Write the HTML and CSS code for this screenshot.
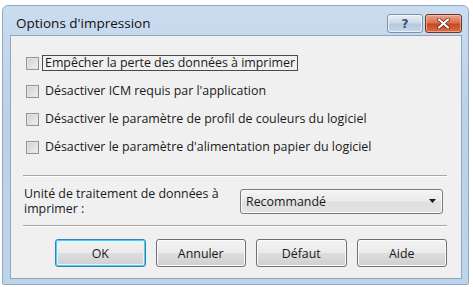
FILE: index.html
```html
<!DOCTYPE html>
<html lang="fr">
<head>
<meta charset="utf-8">
<title>Options d'impression</title>
<link rel="stylesheet" href="styles.css">
</head>
<body>
<div class="window">
  <div class="titlebar">
    <span class="title">Options d'impression</span>
    <div class="caption-buttons">
      <div class="cap-btn help"><span>?</span></div>
      <div class="cap-btn close">
        <svg width="13" height="11" viewBox="0 0 13 11"><path d="M2 1.5 L11 9.5 M11 1.5 L2 9.5" stroke="#5a1f14" stroke-width="3.6" stroke-linecap="round"/><path d="M2 1.5 L11 9.5 M11 1.5 L2 9.5" stroke="#ffffff" stroke-width="2.2" stroke-linecap="round"/></svg>
      </div>
    </div>
  </div>
  <div class="client">
    <div class="checks">
      <div class="row"><span class="box"></span><span class="label focus">Empêcher la perte des données à imprimer</span></div>
      <div class="row"><span class="box"></span><span class="label">Désactiver ICM requis par l'application</span></div>
      <div class="row"><span class="box"></span><span class="label">Désactiver le paramètre de profil de couleurs du logiciel</span></div>
      <div class="row"><span class="box"></span><span class="label">Désactiver le paramètre d'alimentation papier du logiciel</span></div>
    </div>
    <div class="sep first"></div>
    <div class="unit">
      <div class="unit-label"><div>Unité de traitement de données à</div><div>imprimer :</div></div>
      <div class="combo"><span>Recommandé</span><svg class="arrow" width="7" height="4" viewBox="0 0 7 4"><path d="M0 0 H7 L3.5 4 Z" fill="#1a1a1a"/></svg></div>
    </div>
    <div class="sep"></div>
    <div class="buttons">
      <div class="btn default">OK</div>
      <div class="btn">Annuler</div>
      <div class="btn">Défaut</div>
      <div class="btn">Aide</div>
    </div>
  </div>
</div>
</body>
</html>
```

FILE: styles.css
```css
html, body {
  margin: 0;
  padding: 0;
  background: #ffffff;
}
body {
  font-family: "Open Sans", "Noto Sans", sans-serif;
  color: #1a1a1a;
}
.window {
  margin: 5px 0 0 2px;
  width: 467px;
  height: 280px;
  box-sizing: border-box;
  background: linear-gradient(#cadcef, #bad1e9 40%, #bdd4eb);
  border: 1px solid #8fa9c6;
  border-radius: 6px 6px 2px 2px;
  display: flex;
  flex-direction: column;
  padding: 0 6px 5px 7px;
}
.titlebar {
  height: 29px;
  display: flex;
  align-items: flex-start;
  justify-content: space-between;
}
.title {
  font-size: 13.5px;
  margin-left: 6px;
  margin-top: 8px;
  color: #111;
  line-height: 18px;
}
.caption-buttons {
  display: flex;
  gap: 2px;
  margin-top: 8px;
}
.cap-btn {
  height: 19px;
  width: 36px;
  box-sizing: border-box;
  border-radius: 3px;
  display: flex;
  align-items: center;
  justify-content: center;
}
.help {
  border: 1px solid #7d93ad;
  background: linear-gradient(#e7eef6, #cbd9e8 48%, #b5c8de 52%, #c7d8ea);
  box-shadow: inset 0 0 0 1px rgba(255,255,255,0.6);
}
.help span {
  font-family: "DejaVu Sans", sans-serif;
  font-weight: bold;
  font-size: 12px;
  color: #3b4f66;
  line-height: 12px;
}
.close {
  width: 37px;
  border: 1px solid #6e3328;
  background: linear-gradient(#eba58e, #da6c4f 48%, #c9461f 52%, #d96d44);
  box-shadow: inset 0 0 0 1px rgba(255,210,190,0.55);
}
.client {
  flex: 1;
  background: #f0f0f0;
  border: 1px solid #8ea6c0;
  display: flex;
  flex-direction: column;
  padding: 0 14px 0 12px;
}
.checks {
  display: flex;
  flex-direction: column;
  padding-top: 13px;
  padding-left: 3px;
}
.row {
  height: 28px;
  display: flex;
  align-items: center;
  font-size: 12.4px;
}
.box {
  width: 13px;
  height: 13px;
  box-sizing: border-box;
  border: 1px solid #949494;
  background: linear-gradient(135deg, #cfcfcf, #f2f2f2);
  box-shadow: inset 0 0 0 1px #e4e4e4;
  flex: none;
}
.label {
  margin-left: 3px;
  padding: 0 2px;
  border: 1px solid transparent;
  line-height: 14px;
}
.label.focus {
  border-color: #4a4a4a;
}
.sep {
  height: 0;
  border-top: 1px solid #a6a6a6;
  border-bottom: 1px solid #ffffff;
}
.sep.first {
  margin-top: 14px;
}
.unit {
  height: 48px;
  display: flex;
  align-items: center;
  justify-content: space-between;
}
.unit-label {
  font-size: 12.4px;
  line-height: 15px;
  margin-left: 1px;
}
.combo {
  width: 203px;
  height: 25px;
  box-sizing: border-box;
  border: 1px solid #7a7a7a;
  border-radius: 3px;
  background: linear-gradient(#f4f4f4, #ebebeb 48%, #dedede 52%, #e4e4e4);
  box-shadow: inset 0 0 0 1px #fbfbfb;
  display: flex;
  align-items: center;
  justify-content: space-between;
  padding: 0 6px 0 5px;
  font-size: 12.4px;
  margin-right: 4px;
}
.buttons {
  display: flex;
  gap: 10px;
  padding-left: 32px;
  margin-top: 12px;
}
.btn {
  width: 91px;
  height: 28px;
  box-sizing: border-box;
  border: 1px solid #707070;
  border-radius: 3px;
  background: linear-gradient(#f2f2f2, #ebebeb 48%, #dddddd 52%, #cfcfcf);
  box-shadow: inset 0 0 0 1px #fcfcfc;
  display: flex;
  align-items: center;
  justify-content: center;
  font-size: 12.4px;
}
.btn.default {
  border-color: #3c7fb1;
  box-shadow: inset 0 0 0 1px #48d0f6, inset 0 0 0 2px #dff4fc;
}
```
